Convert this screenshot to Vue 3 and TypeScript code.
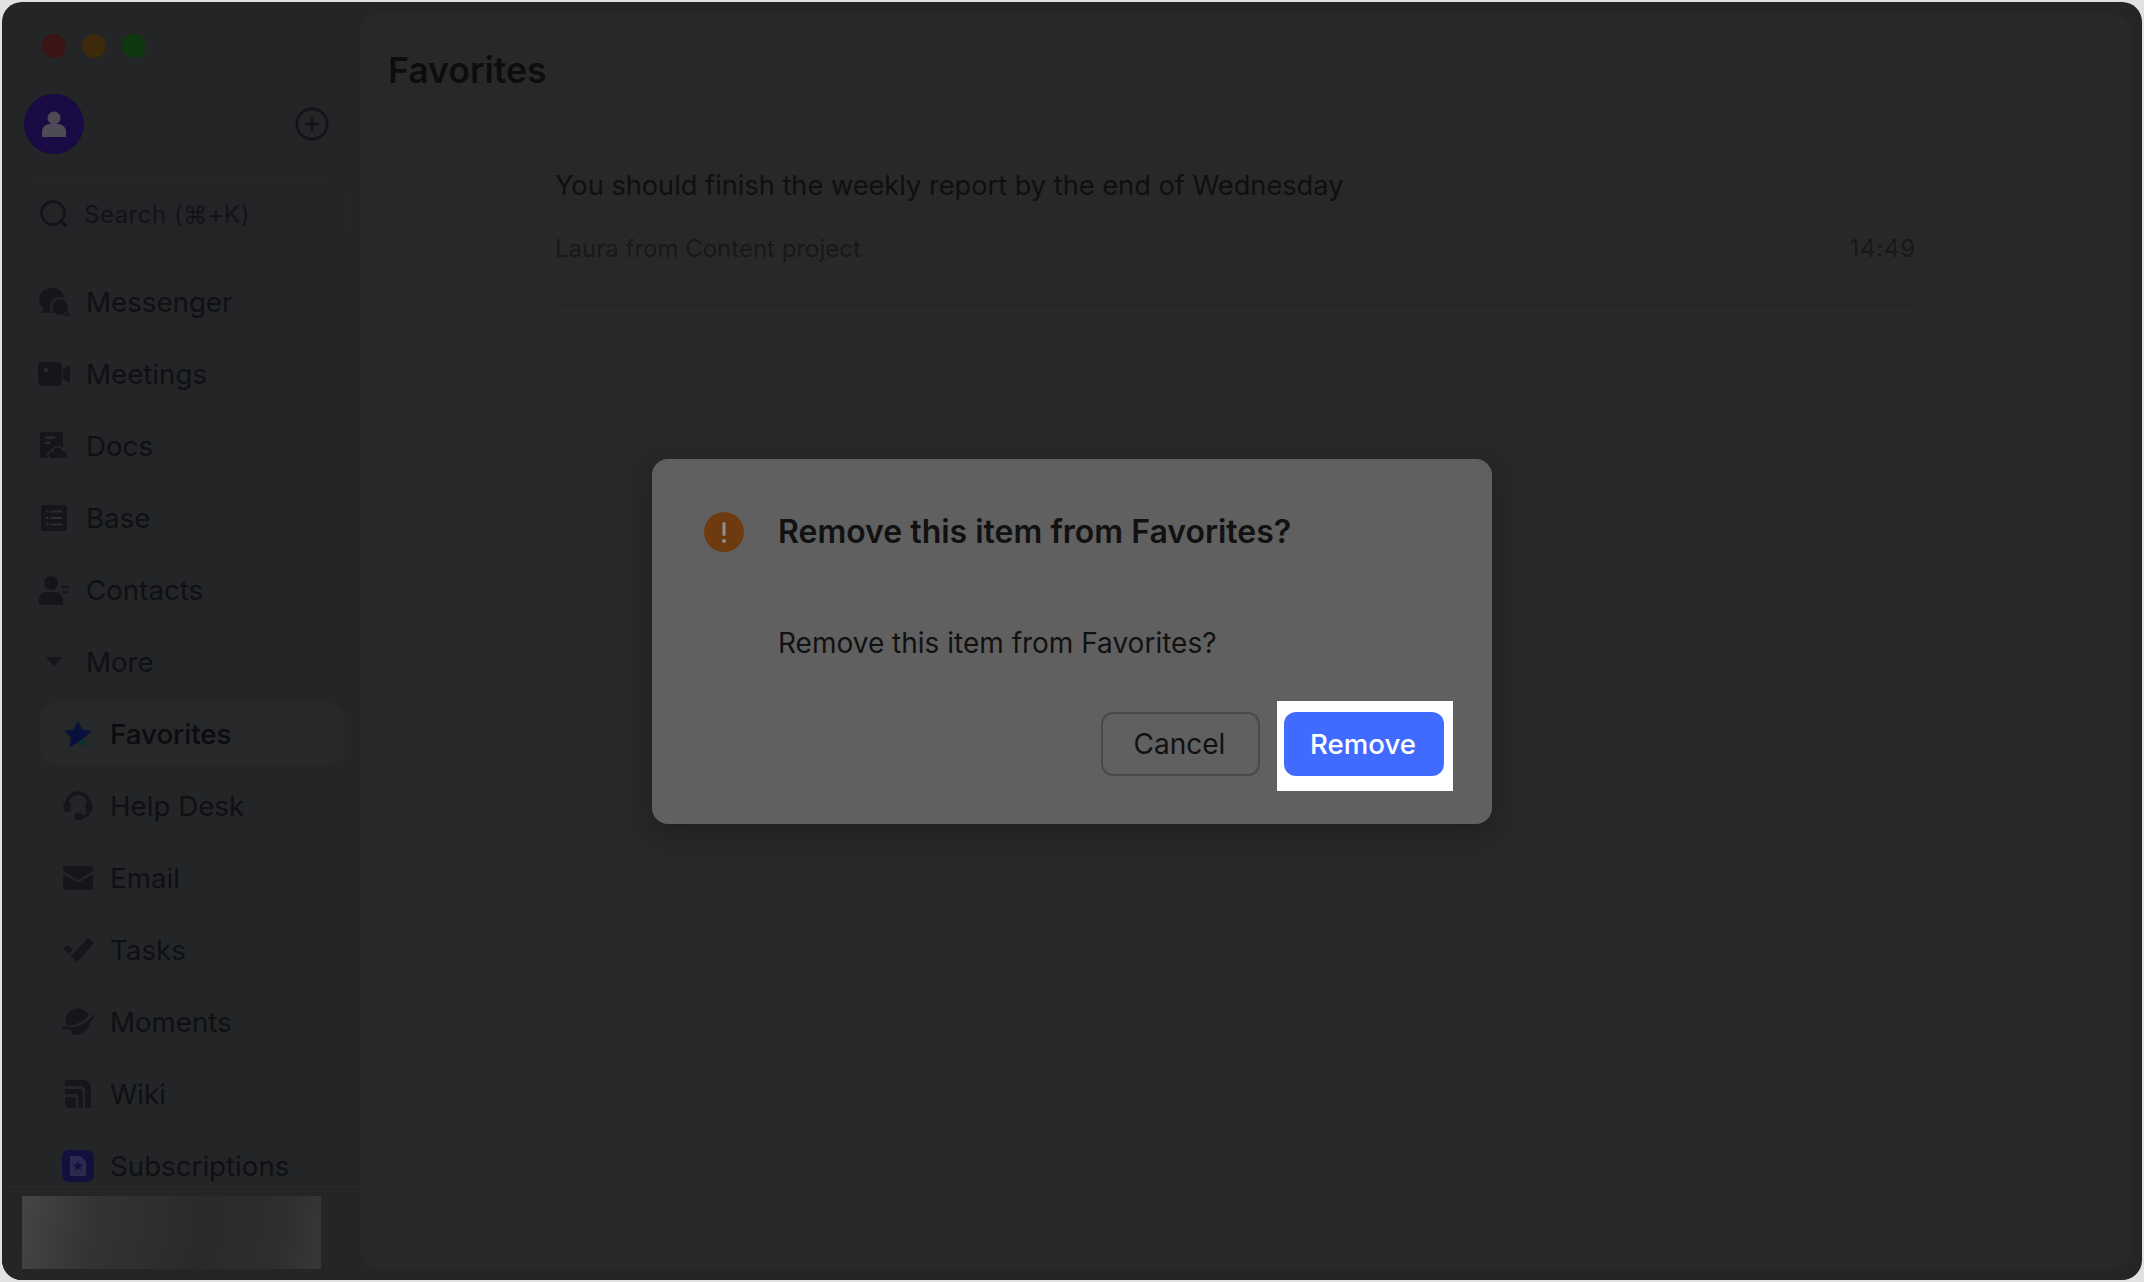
<script setup lang="ts">
interface Item { label: string; icon: string; active?: boolean }
const topItems: Item[] = [
  { label: 'Messenger', icon: 'messenger' },
  { label: 'Meetings', icon: 'meetings' },
  { label: 'Docs', icon: 'docs' },
  { label: 'Base', icon: 'base' },
  { label: 'Contacts', icon: 'contacts' },
  { label: 'More', icon: 'more' },
]
const subItems: Item[] = [
  { label: 'Favorites', icon: 'star', active: true },
  { label: 'Help Desk', icon: 'help' },
  { label: 'Email', icon: 'email' },
  { label: 'Tasks', icon: 'tasks' },
  { label: 'Moments', icon: 'moments' },
  { label: 'Wiki', icon: 'wiki' },
  { label: 'Subscriptions', icon: 'subs' },
]
const lights = ['#3b1414', '#3d2a0b', '#0d3810']
</script>

<template>
  <div class="window">
    <aside class="sidebar">
      <div class="lights">
        <span v-for="c in lights" :key="c" class="light" :style="{ background: c }"></span>
      </div>
      <div class="account">
        <span class="avatar">
          <svg width="30" height="30" viewBox="0 0 30 30"><circle cx="15" cy="9" r="6.5" fill="#4e4a56"/><path d="M3 28v-5c0-5 4-8 8-8h8c4 0 8 3 8 8v5z" fill="#4e4a56"/></svg>
        </span>
        <svg class="plus" width="34" height="34" viewBox="0 0 34 34" fill="none" stroke="#121316" stroke-width="2.5"><circle cx="17" cy="17" r="15.2"/><path d="M17 10v14M10 17h14"/></svg>
      </div>
      <div class="search">
        <svg width="30" height="30" viewBox="0 0 30 30" fill="none" stroke="#121316" stroke-width="2.5"><circle cx="14" cy="14" r="11.5"/><path d="M22 22l5.5 5.5"/></svg>
        <span class="search-text">Search (⌘+K)</span>
      </div>
      <nav class="nav">
        <div v-for="it in topItems" :key="it.label" class="row">
          <span class="ic">
            <svg v-if="it.icon === 'messenger'" width="32" height="30" viewBox="0 0 32 30"><path d="M14 1c7 0 12 5 12 10 0 8-4 15-10 15H3l3-4c-3-2-5-6-5-10C1 6 7 1 14 1z" fill="#15161a"/><circle cx="22" cy="20" r="9" fill="#15161a" stroke="#242527" stroke-width="2.500"/><path d="M25 29h6v-4z" fill="#15161a"/></svg>
            <svg v-else-if="it.icon === 'meetings'" width="32" height="24" viewBox="0 0 32 24"><rect width="24" height="24" rx="4" fill="#15161a"/><circle cx="8" cy="8" r="2" fill="#2e2e30"/><path d="M25 7l7-4v18l-7-4z" fill="#15161a"/></svg>
            <svg v-else-if="it.icon === 'docs'" width="30" height="28" viewBox="0 0 30 28"><rect x="1" width="23" height="26" rx="2" fill="#15161a"/><path d="M6 5.500h10M6 11h5" stroke="#2e2e30" stroke-width="2"/><path d="M11 27c-4-3-2-8 2-8 1-5 9-6 11-1 4 0 6 6 4 9z" fill="#15161a" stroke="#242527" stroke-width="2"/></svg>
            <svg v-else-if="it.icon === 'base'" width="26" height="26" viewBox="0 0 26 26"><rect width="26" height="26" rx="2.5" fill="#15161a"/><path d="M10 6.500h11M10 13h11M10 19.500h11M5 6.500h2.500M5 13h2.500M5 19.500h2.500" stroke="#2e2e30" stroke-width="2"/></svg>
            <svg v-else-if="it.icon === 'contacts'" width="30" height="29" viewBox="0 0 30 29"><circle cx="12" cy="7" r="7" fill="#15161a"/><path d="M0 29v-5c0-5 4-8 8-8h8c4 0 8 3 8 8v5z" fill="#15161a"/><path d="M22 11h8M24 16.500h5" stroke="#15161a" stroke-width="2.500"/></svg>
            <svg v-else width="18" height="10" viewBox="0 0 18 10"><path d="M1 0h16L9 10z" fill="#15161a"/></svg>
          </span>
          <span>{{ it.label }}</span>
        </div>
        <div class="sub">
          <div v-for="it in subItems" :key="it.label" class="row subrow" :class="{ active: it.active }">
            <span class="ic">
              <svg v-if="it.icon === 'star'" width="28" height="27" viewBox="0 0 28 27"><path d="M14 0l4.200 8.600 9.500 1.300-6.900 6.600 1.700 9.500-8.500-4.500-8.500 4.500 1.700-9.500L.3 9.900l9.500-1.300z" fill="#07113c"/><path d="M22.500 26L14 21.500l7-6z" fill="#0e3330"/></svg>
              <svg v-else-if="it.icon === 'help'" width="30" height="30" viewBox="0 0 30 30" fill="none"><path d="M4 14C4 7 9 2 15 2s11 5 11 12" stroke="#15161a" stroke-width="3.500"/><rect x="0.500" y="11" width="7" height="10" rx="3" fill="#15161a"/><rect x="22.500" y="11" width="7" height="10" rx="3" fill="#15161a"/><path d="M26 19c0 5-4 7-8 7" stroke="#15161a" stroke-width="3"/><rect x="11" y="22" width="9" height="7" rx="3.500" fill="#15161a"/></svg>
              <svg v-else-if="it.icon === 'email'" width="30" height="24" viewBox="0 0 30 24"><path d="M0 0h30v5L15 14 0 5z" fill="#15161a"/><path d="M0 8l15 9 15-9v14a2 2 0 01-2 2H2a2 2 0 01-2-2z" fill="#15161a"/></svg>
              <svg v-else-if="it.icon === 'tasks'" width="32" height="24" viewBox="0 0 32 24"><path d="M26 0l6 5-16 18a1.500 1.500 0 01-2 0l-5-5z" fill="#15161a"/><path d="M5 7l6 5-4 4-6-5z" fill="#15161a"/></svg>
              <svg v-else-if="it.icon === 'moments'" width="32" height="28" viewBox="0 0 32 28" fill="none"><circle cx="16" cy="13" r="12.500" fill="#15161a"/><path d="M1 19C10 22 24 17 31 7" stroke="#242527" stroke-width="5"/><path d="M1 19C10 23 25 18 31.500 8.500" stroke="#15161a" stroke-width="2.500" stroke-linecap="round"/><path d="M8 24c6 0 12-2 18-6-2 6-6 9-10 9-3 0-6-1-8-3z" fill="#15161a"/></svg>
              <svg v-else-if="it.icon === 'wiki'" width="26" height="28" viewBox="0 0 26 28"><path d="M0 0h18c4 0 8 3 8 8v20h-6V10c0-2-1-4-4-4H0z" fill="#15161a"/><path d="M0 9h13c3 0 5 2 5 5v14h-5V16c0-1-1-2-2-2H0z" fill="#15161a"/><path d="M0 17h8c2 0 3 1 3 3v8H4c-2 0-4-2-4-4z" fill="#15161a"/></svg>
              <svg v-else width="32" height="32" viewBox="0 0 32 32"><rect width="32" height="32" rx="7" fill="#14103e"/><path d="M8 6h11l5 6v14H8z" fill="#2b2a4f"/><path d="M16 11l1.500 3.200 3.500.4-2.600 2.300.8 3.400-3.200-1.800-3.200 1.800.8-3.400L11 14.600l3.500-.4z" fill="#14103e"/></svg>
            </span>
            <span>{{ it.label }}</span>
          </div>
        </div>
      </nav>
      <footer class="foot"><div class="blur"></div></footer>
    </aside>

    <main class="main">
      <header class="head">Favorites</header>
      <section class="msg">
        <p class="msg-text">You should finish the weekly report by the end of Wednesday</p>
        <div class="meta"><span>Laura from Content project</span><span class="time">14:49</span></div>
      </section>
    </main>

    <div class="dialog" role="dialog">
      <div class="d-title">
        <svg width="40" height="40" viewBox="0 0 40 40"><circle cx="20" cy="20" r="20" fill="#6e3a10"/><rect x="18.400" y="10" width="3.200" height="14" rx="1.600" fill="#8d8d8d"/><circle cx="20" cy="29" r="2" fill="#8d8d8d"/></svg>
        <span>Remove this item from Favorites?</span>
      </div>
      <p class="d-body">Remove this item from Favorites?</p>
      <div class="d-actions">
        <button class="btn cancel">Cancel</button>
        <div class="mark"><button class="btn remove">Remove</button></div>
      </div>
    </div>
  </div>
</template>

<style>
html, body { background: #e2e2e2; }
</style>

<style scoped>
.window {
  position: relative;
  box-sizing: border-box;
  width: 2140px;
  height: 1278px;
  margin: 2px;
  display: flex;
  overflow: hidden;
  background: #242527;
  border-radius: 20px;
  font-family: Inter, "Noto Sans", sans-serif;
  color: #0f1013;
}
.sidebar {
  width: 358px;
  flex: none;
  height: 100%;
  display: flex;
  flex-direction: column;
  position: relative;
}
.lights { display: flex; gap: 16px; padding: 32px 0 0 40px; }
.light { width: 24px; height: 24px; border-radius: 50%; }
.account {
  display: flex;
  align-items: center;
  justify-content: space-between;
  padding: 36px 31px 0 22px;
}
.avatar {
  width: 60px; height: 60px; border-radius: 50%;
  background: #1a0b45;
  display: flex; align-items: center; justify-content: center;
}
.search {
  margin: 28px 15px 0 15px;
  height: 64px;
  box-sizing: border-box;
  border-radius: 16px;
  border: 1px solid #262729;
  background: #232426;
  display: flex; align-items: center; gap: 15px;
  padding-left: 21px;
  font-size: 24px;
  color: #121316;
}
.search-text { letter-spacing: .5px; }
.nav {
  margin-top: 20px;
  flex: 1;
  min-height: 0;
  overflow: hidden;
  font-size: 27.7px;
}
.row {
  height: 72px;
  display: flex;
  align-items: center;
  padding-left: 36px;
}
.ic { width: 32px; height: 32px; margin-right: 16px; display: flex; align-items: center; justify-content: center; flex: none; }
.subrow { margin: 0 15px 0 38px; padding-left: 22px; border-radius: 16px; position: relative; }
.active { font-weight: 500; color: #0b0c0f; }
.active::before {
  content: "";
  position: absolute;
  left: 0; right: 0; top: 4px; bottom: 4px;
  background: #27282a;
  border-radius: 16px;
  z-index: 0;
}
.active > * { position: relative; z-index: 1; }
.foot {
  flex: none;
  height: 94px;
  border-top: 1px solid #2a2b2d;
  box-sizing: border-box;
  padding: 9px 0 0 20px;
  background: #242527;
}
.blur {
  width: 299px; height: 73px;
  background: linear-gradient(100deg, #454545 0%, #333 25%, #2a2a2b 60%, #2e2e2e 85%, #383838 100%);
}
.main {
  flex: 1;
  margin: 12px 10px 10px 0;
  background: #282828;
  border-radius: 20px;
  display: flex;
  flex-direction: column;
  min-width: 0;
}
.head {
  height: 113px;
  box-sizing: border-box;
  border-bottom: 2px solid #252525;
  padding: 2px 0 0 28px;
  display: flex;
  align-items: center;
  font-size: 35.6px;
  font-weight: 600;
  color: #0c0d0f;
}
.msg {
  margin: 0 216px 0 195px;
  height: 179px;
  box-sizing: border-box;
  border-bottom: 2px solid #252525;
}
.msg-text { margin: 0; padding-top: 39px; font-size: 27.2px; line-height: 40px; color: #0e0f11; }
.meta { display: flex; justify-content: space-between; margin-top: 27px; font-size: 24px; line-height: 32px; color: #17181a; }
.time { letter-spacing: .8px; }
.dialog {
  position: absolute;
  left: 650px;
  top: 457px;
  width: 840px;
  height: 365px;
  box-sizing: border-box;
  background: #606060;
  border-radius: 16px;
  box-shadow: 0 8px 24px rgba(0, 0, 0, .25);
  padding: 51px 0 0 52px;
  display: flex;
  flex-direction: column;
  color: #111;
}
.d-title { display: flex; align-items: center; gap: 34px; font-size: 32px; font-weight: 600; line-height: 44px; }
.d-body { margin: 0; padding: 69px 0 0 74px; font-size: 28px; line-height: 40px; }
.d-actions { margin-top: 38px; display: flex; align-items: flex-start; justify-content: flex-end; gap: 17px; padding-right: 39px; }
.btn {
  font: inherit;
  font-size: 28px;
  height: 64px;
  border-radius: 12px;
  box-sizing: border-box;
  padding: 0 2px 0 0;
}
.cancel { width: 159px; margin-top: 11px; background: transparent; border: 2px solid #4a4a4a; color: #111; }
.mark { background: #fff; padding: 11px 9px 15px 7px; }
.remove { width: 160px; display: block; border: 0; background: #416bff; color: #fff; font-weight: 500; font-size: 27.6px; }
</style>
